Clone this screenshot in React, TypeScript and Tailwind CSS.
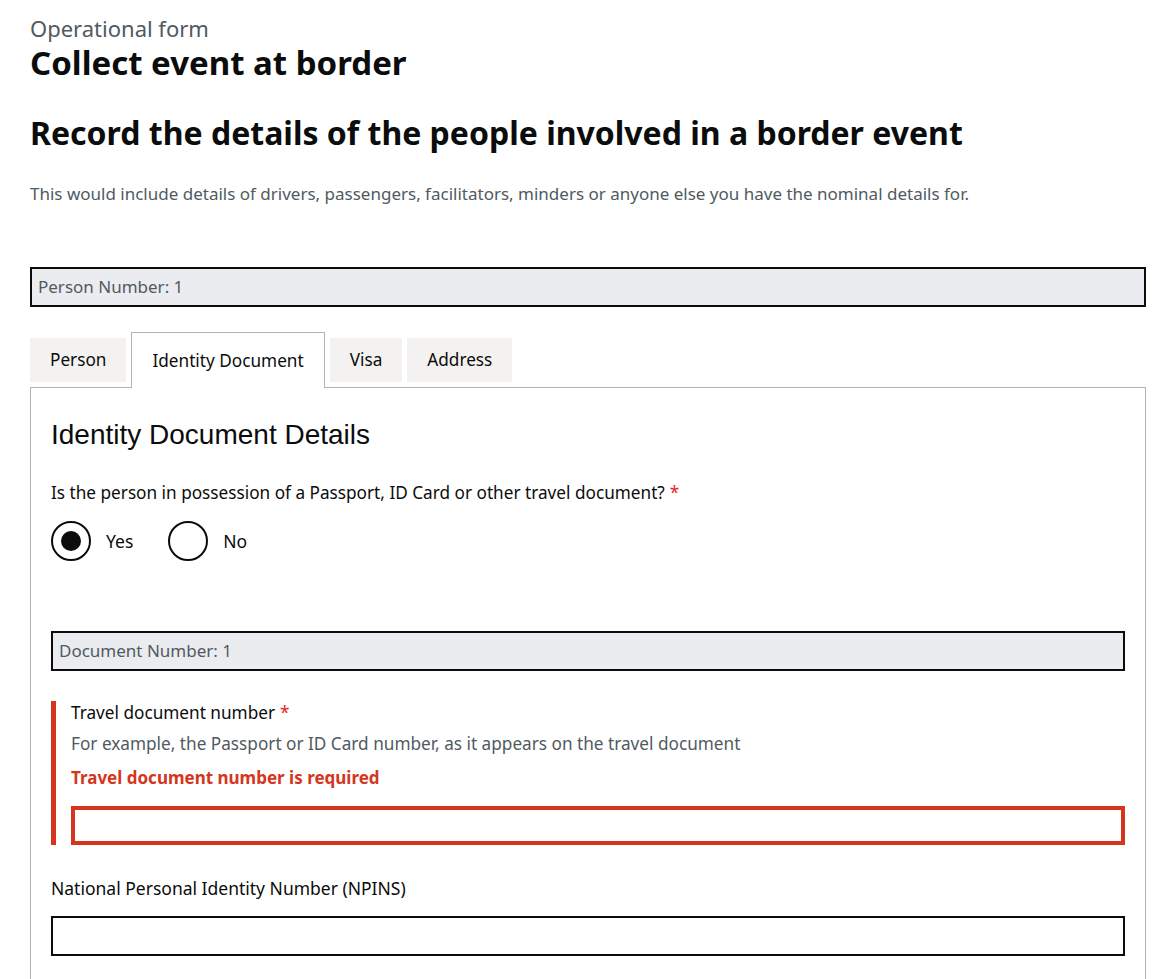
import React from 'react';

const FONT = { fontFamily: '"Noto Sans", Arial, sans-serif' };

function GreyBar({ children }: { children: React.ReactNode }) {
  return (
    <div className="h-[40px] border-2 border-[#0b0c0c] bg-[#ebecef] px-[6px] flex items-center text-[17px] text-[#505a5f]">
      {children}
    </div>
  );
}

function Required() {
  return <span className="text-[#e8231b] ml-[5px]">*</span>;
}

function Radio({ label, checked }: { label: string; checked?: boolean }) {
  return (
    <label className="flex items-center gap-[15px]">
      <span className="w-[40px] h-[40px] rounded-full border-2 border-[#0b0c0c] flex items-center justify-center">
        {checked && <span className="w-[20px] h-[20px] rounded-full bg-[#0b0c0c]" />}
      </span>
      <span className="text-[17.5px] text-[#0b0c0c]">{label}</span>
    </label>
  );
}

const TABS = ['Person', 'Identity Document', 'Visa', 'Address'];

export default function App() {
  return (
    <div className="min-h-screen bg-white pl-[30px] pr-[20px] pt-[14px] text-[#0b0c0c]" style={FONT}>
      <div className="text-[22px] leading-[29px] text-[#505a5f]">Operational form</div>
      <h1 className="text-[33px] leading-[40px] font-bold">Collect event at border</h1>
      <h2 className="mt-[28px] text-[32px] leading-[44px] font-bold">
        Record the details of the people involved in a border event
      </h2>
      <p className="mt-[27px] text-[17px] leading-[24px] text-[#505a5f]">
        This would include details of drivers, passengers, facilitators, minders or anyone else you have the nominal details for.
      </p>

      <div className="mt-[61px]">
        <GreyBar>Person Number: 1</GreyBar>
      </div>

      <div className="mt-[25px] flex items-end gap-[5px]">
        {TABS.map((t) =>
          t === 'Identity Document' ? (
            <div
              key={t}
              className="relative z-10 -mb-px h-[56px] px-[20px] flex items-center bg-white border border-b-0 border-[#b1b4b6] text-[17.2px]"
            >
              {t}
            </div>
          ) : (
            <div key={t} className="h-[44px] px-[20px] mb-[5px] flex items-center bg-[#f3f2f1] text-[17.2px]">
              {t}
            </div>
          )
        )}
      </div>

      <div className="border border-[#b1b4b6] px-[20px] pt-[31px] pb-[40px]">
        <h3 className="text-[28px] leading-[32px]" style={{ fontFamily: '"Liberation Sans", Arial, sans-serif' }}>
          Identity Document Details
        </h3>

        <div className="mt-[30px] text-[17.2px] leading-[24px]">
          Is the person in possession of a Passport, ID Card or other travel document?<Required />
        </div>
        <div className="mt-[16px] flex gap-[35px]">
          <Radio label="Yes" checked />
          <Radio label="No" />
        </div>

        <div className="mt-[70px]">
          <GreyBar>Document Number: 1</GreyBar>
        </div>

        <div className="mt-[30px] border-l-[5px] border-[#d4351c] pl-[15px]">
          <div className="text-[17.2px] leading-[24px]">
            Travel document number<Required />
          </div>
          <div className="mt-[7px] text-[17.2px] leading-[24px] text-[#505a5f]">
            For example, the Passport or ID Card number, as it appears on the travel document
          </div>
          <div className="mt-[10px] text-[17px] leading-[24px] font-bold text-[#d4351c]">
            Travel document number is required
          </div>
          <div className="mt-[16px] h-[39px] border-[4px] border-[#d4351c] bg-white" />
        </div>

        <div className="mt-[31px] text-[17.5px] leading-[24px]">National Personal Identity Number (NPINS)</div>
        <div className="mt-[16px] h-[40px] border-2 border-[#0b0c0c] bg-white" />
      </div>
    </div>
  );
}
